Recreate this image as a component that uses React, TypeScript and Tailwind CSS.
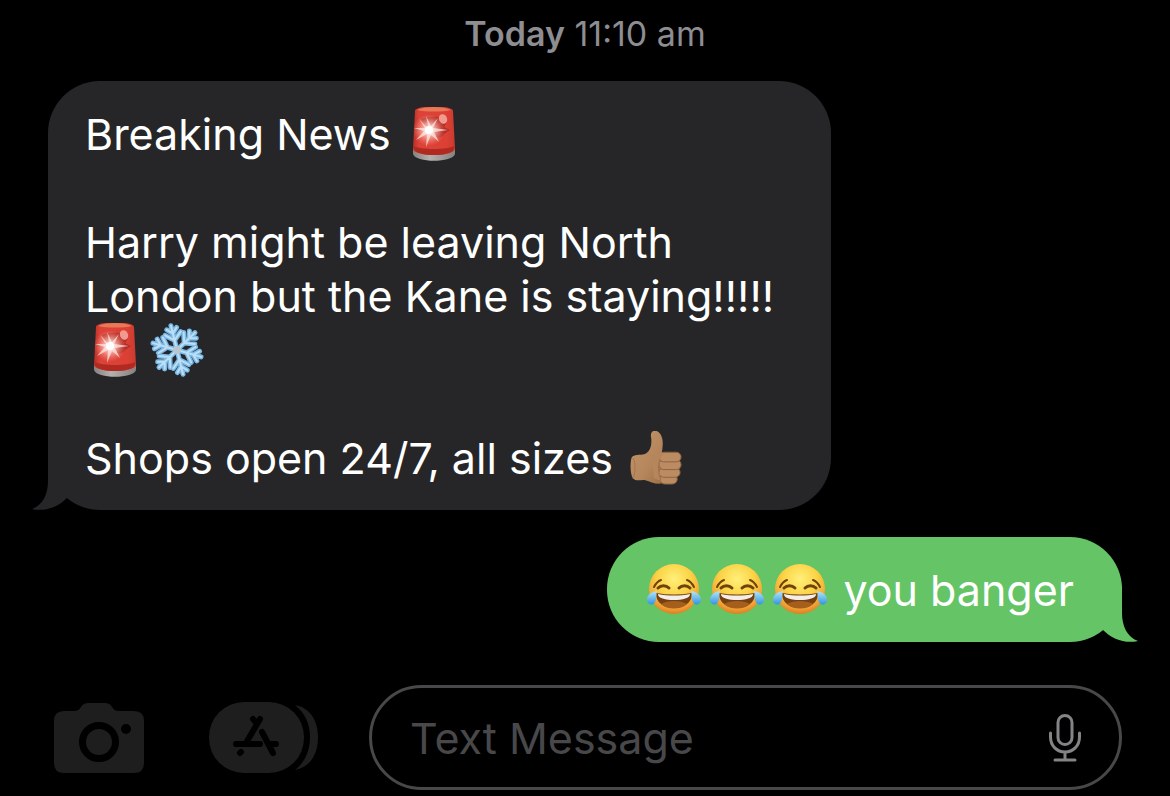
import { useState } from "react";

function Siren() {
  return (
    <svg
      role="img"
      aria-label="Siren"
      viewBox="0 0 54 54"
      className="inline-block size-[54px] align-top"
    >
      <defs>
        <linearGradient id="sirenGlass" x1="0" x2="1" y1="0" y2="0">
          <stop offset="0" stopColor="#b92f27" />
          <stop offset="0.15" stopColor="#dc4338" />
          <stop offset="0.8" stopColor="#dc4034" />
          <stop offset="1" stopColor="#c93a30" />
        </linearGradient>
        <linearGradient id="sirenBase" x1="0" x2="1" y1="0" y2="0">
          <stop offset="0" stopColor="#85817f" />
          <stop offset="0.4" stopColor="#b5b1ae" />
          <stop offset="1" stopColor="#85817f" />
        </linearGradient>
        <radialGradient id="sirenGlow">
          <stop offset="0" stopColor="#fff" />
          <stop offset="0.35" stopColor="#ffc9c0" stopOpacity="0.8" />
          <stop offset="1" stopColor="#ff8a7c" stopOpacity="0" />
        </radialGradient>
      </defs>
      <path
        d="M6 42C6 40 48 40 48 42V47C46 56 8 56 6 47Z"
        fill="url(#sirenBase)"
      />
      <path
        d="M8 4C8-2 46-2 46 4L48 42C46 50 8 50 6 42Z"
        fill="url(#sirenGlass)"
      />
      <path d="M7 39C13 43 41 43 47 39V42C45 50 9 50 7 42Z" fill="#b02a22" />
      <path
        d="M10 3C18-1 36-1 44 3C36 5 18 5 10 3Z"
        fill="#ef8a60"
        opacity="0.75"
      />
      <path
        d="M14 12C22 9 35 8 40 15L37 20L43 23L37 27C35 32 28 31 24 27Z"
        fill="#9c241f"
        opacity="0.65"
      />
      <ellipse
        cx="36"
        cy="12"
        rx="4"
        ry="5"
        transform="rotate(-25 36 12)"
        fill="#f09a90"
      />
      <circle cx="22" cy="23" r="16" fill="url(#sirenGlow)" />
      <path
        d="M22 23L19 9L24 19L31 11L26 21L41 23L27 25L32 35L24 28L19 40L20 27L9 33L17 24L7 21L18 21L12 12Z"
        fill="#fff0ed"
        opacity="0.7"
      />
      <circle cx="22" cy="23" r="4" fill="#fff" />
    </svg>
  );
}

const ARMS = [0, 60, 120, 180, 240, 300];

function Snowflake() {
  return (
    <svg
      role="img"
      aria-label="Snowflake"
      viewBox="0 0 56 54"
      className="inline-block h-[54px] w-[56px] align-top"
    >
      <defs>
        <g id="flakeArm">
          <path d="M28 27V2M28 17L20 10M28 17L36 10M28 10L23 5M28 10L33 5" />
        </g>
      </defs>
      <g transform="rotate(-14 28 27)" fill="none" strokeLinecap="round">
        <g stroke="#7ab8e6" strokeWidth="5">
          {ARMS.map((angle) => (
            <use
              key={angle}
              href="#flakeArm"
              transform={`rotate(${angle} 28 27)`}
            />
          ))}
        </g>
        <g stroke="#bddff5" strokeWidth="2">
          {ARMS.map((angle) => (
            <use
              key={angle}
              href="#flakeArm"
              transform={`rotate(${angle} 28 27)`}
            />
          ))}
        </g>
      </g>
      <circle cx="28" cy="27" r="4" fill="#b8c6cf" />
    </svg>
  );
}

function ThumbsUp() {
  return (
    <svg
      role="img"
      aria-label="Thumbs up"
      viewBox="0 0 54 56"
      className="inline-block size-[54px] align-top"
    >
      <defs>
        <linearGradient id="skin" x1="0" x2="1" y1="0" y2="1">
          <stop offset="0" stopColor="#c4966b" />
          <stop offset="0.6" stopColor="#b5865c" />
          <stop offset="1" stopColor="#9b6d45" />
        </linearGradient>
      </defs>
      <path
        d="M2 27C6 23 13 26 17 23C21 20 23 15 22 7C20-1 28-3 32 4C35 10 34 16 33 23L36 53C30 57 22 53 16 51C11 50 7 53 3 49C0 44 0 32 2 27Z"
        fill="url(#skin)"
      />
      <path
        d="M3 28C6 31 6 44 3 49"
        fill="none"
        stroke="#a1734d"
        strokeWidth="1"
      />
      <g fill="#bb8c62" stroke="#8d623f" strokeWidth="1">
        <rect x="31" y="45" width="18" height="10" rx="5" />
        <rect x="30" y="38" width="22" height="10" rx="5" />
        <rect x="30" y="30" width="23" height="10" rx="5" />
        <rect x="30" y="22" width="23" height="10" rx="5" />
      </g>
      <path
        d="M22 25C27 21 31 21 35 23L32 28C29 35 30 44 33 52L25 49Z"
        fill="#b5865c"
      />
      <path
        d="M31 29C29 36 29 44 32 51"
        fill="none"
        stroke="#9d7049"
        strokeWidth="1"
      />
    </svg>
  );
}

function Joy() {
  return (
    <svg
      role="img"
      aria-label="Face with tears of joy"
      viewBox="0 0 54 54"
      className="inline-block size-[54px] align-top"
    >
      <defs>
        <radialGradient id="face" cx="0.5" cy="0.3" r="0.7">
          <stop offset="0" stopColor="#fff07a" />
          <stop offset="0.5" stopColor="#fbd244" />
          <stop offset="0.85" stopColor="#f0a035" />
          <stop offset="1" stopColor="#dd7f20" />
        </radialGradient>
        <linearGradient id="tear" x1="0.5" x2="0.5" y1="0" y2="1">
          <stop offset="0" stopColor="#b6e5f8" />
          <stop offset="1" stopColor="#3295e0" />
        </linearGradient>
      </defs>
      <circle cx="27" cy="26" r="25" fill="url(#face)" />
      <g fill="none" stroke="#70420f" strokeLinecap="round">
        <path d="M7 24C9 20 11 18 14 17" strokeWidth="2" />
        <path d="M47 24C45 20 43 18 40 17" strokeWidth="2" />
        <path d="M11 25C14 22 19 22 22 25" strokeWidth="3" />
        <path d="M32 25C35 22 40 22 43 25" strokeWidth="3" />
      </g>
      <path d="M9 30C21 32 33 32 45 30C46 50 8 50 9 30Z" fill="#74400f" />
      <path d="M11 31C21 33 33 33 43 31C44 39 10 39 11 31Z" fill="#f3eeeb" />
      <path d="M14 41C20 37 34 37 40 41C34 47 20 47 14 41Z" fill="#a55e1c" />
      <path
        d="M10 28C3 29-1 34 0 38C1 42 6 43 8 39C10 36 9 31 10 28Z"
        fill="url(#tear)"
      />
      <path
        d="M44 28C51 29 55 34 54 38C53 42 48 43 46 39C44 36 45 31 44 28Z"
        fill="url(#tear)"
      />
    </svg>
  );
}

function Tail({ className }: { className: string }) {
  return (
    <svg
      aria-hidden="true"
      viewBox="0 -12 40 56"
      className={`absolute bottom-0 h-[56px] w-[40px] ${className}`}
    >
      <path d="M16-12V15C16 28 11 39 0 43C13 46 26 41 35 32L40-12Z" />
    </svg>
  );
}

function CameraIcon() {
  return (
    <svg aria-hidden="true" viewBox="0 0 90 70" className="h-[70px] w-[90px]">
      <path
        d="M10 8H20C23 8 25 7 27 4C29 1 31 0 34 0H51C54 0 56 1 58 4C60 7 62 8 65 8H80Q90 8 90 18V60Q90 70 80 70H10Q0 70 0 60V18Q0 8 10 8Z"
        fill="#1e1e1e"
      />
      <circle cx="45" cy="39" r="16.5" fill="none" stroke="#000" strokeWidth="7" />
      <circle cx="72" cy="26" r="5" fill="#000" />
    </svg>
  );
}

function AppsIcon() {
  return (
    <svg aria-hidden="true" viewBox="0 0 109 71" className="h-[71px] w-[109px]">
      <path
        d="M86 3C101 6 109 18 109 35C109 53 101 65 86 68C96 60 101 49 101 35C101 22 96 11 86 3Z"
        fill="#1e1e1e"
      />
      <rect width="95" height="71" rx="35" fill="#1e1e1e" />
      <g stroke="#000" strokeWidth="6" strokeLinecap="round" fill="none">
        <path d="M51 17L37 41M44 17L48 22M27 42H51M31 51L32 50" />
        <path d="M53 30L64 51M60 42H67" />
      </g>
    </svg>
  );
}

function MicIcon() {
  return (
    <svg
      aria-hidden="true"
      viewBox="0 0 32 48"
      className="h-[48px] w-[32px]"
      fill="none"
      stroke="#848486"
      strokeWidth="3"
      strokeLinecap="round"
    >
      <rect x="9" y="1.5" width="14" height="29" rx="7" />
      <path d="M1.5 19V23C1.5 32 8 38 16 38C24 38 30.5 32 30.5 23V19M16 38V46M6 46H26" />
    </svg>
  );
}

export default function App() {
  const [message, setMessage] = useState<string>("");

  return (
    <main className="flex min-h-screen flex-col bg-black pr-12 pl-12 font-[Inter,'Liberation_Sans',sans-serif] text-[43px] leading-[54px] text-white">
      <p className="pt-3 text-center text-[34px] leading-[44px] text-[#8d8d92]">
        <span className="font-semibold">Today</span> 11:10 am
      </p>

      <section className="mt-[25px] flex flex-col gap-[27px]">
        <div className="relative w-full max-w-[783px] self-start rounded-[52px] bg-[#262628] pt-[26px] pr-10 pb-[25px] pl-[37px]">
          <Tail className="-left-4 fill-[#262628]" />
          <p>
            Breaking News{" "}
            <span className="ml-1 inline-flex align-top">
              <Siren />
            </span>
          </p>
          <br />
          <p>
            Harry might be leaving North London but the Kane is staying!!!!!{" "}
            <span className="ml-[3px] inline-flex gap-[7px] align-top">
              <Siren />
              <Snowflake />
            </span>
          </p>
          <br />
          <p>
            Shops open 24/7, all sizes{" "}
            <span className="ml-1 inline-flex align-top">
              <ThumbsUp />
            </span>
          </p>
        </div>

        <div className="relative flex items-center gap-4 self-end rounded-[52px] bg-[#65c466] pt-[26px] pr-12 pb-[25px] pl-10">
          <Tail className="-right-4 -scale-x-100 fill-[#65c466]" />
          <span className="flex gap-[9px]">
            <Joy />
            <Joy />
            <Joy />
          </span>
          <p>you banger</p>
        </div>
      </section>

      <form
        className="mt-[43px] flex items-center pl-[6px]"
        onSubmit={(e) => e.preventDefault()}
      >
        <button type="button" aria-label="Camera">
          <CameraIcon />
        </button>
        <button type="button" aria-label="Apps" className="ml-[65px]">
          <AppsIcon />
        </button>
        <div className="ml-[51px] flex h-[105px] min-w-0 flex-1 items-center rounded-full border-3 border-[#48484a] pr-[38px] pl-[38px]">
          <input
            type="text"
            aria-label="Text Message"
            placeholder="Text Message"
            value={message}
            onChange={(e) => setMessage(e.target.value)}
            className="min-w-0 flex-1 bg-transparent outline-none placeholder:text-[#48484a]"
          />
          <button type="button" aria-label="Dictate">
            <MicIcon />
          </button>
        </div>
      </form>
    </main>
  );
}
